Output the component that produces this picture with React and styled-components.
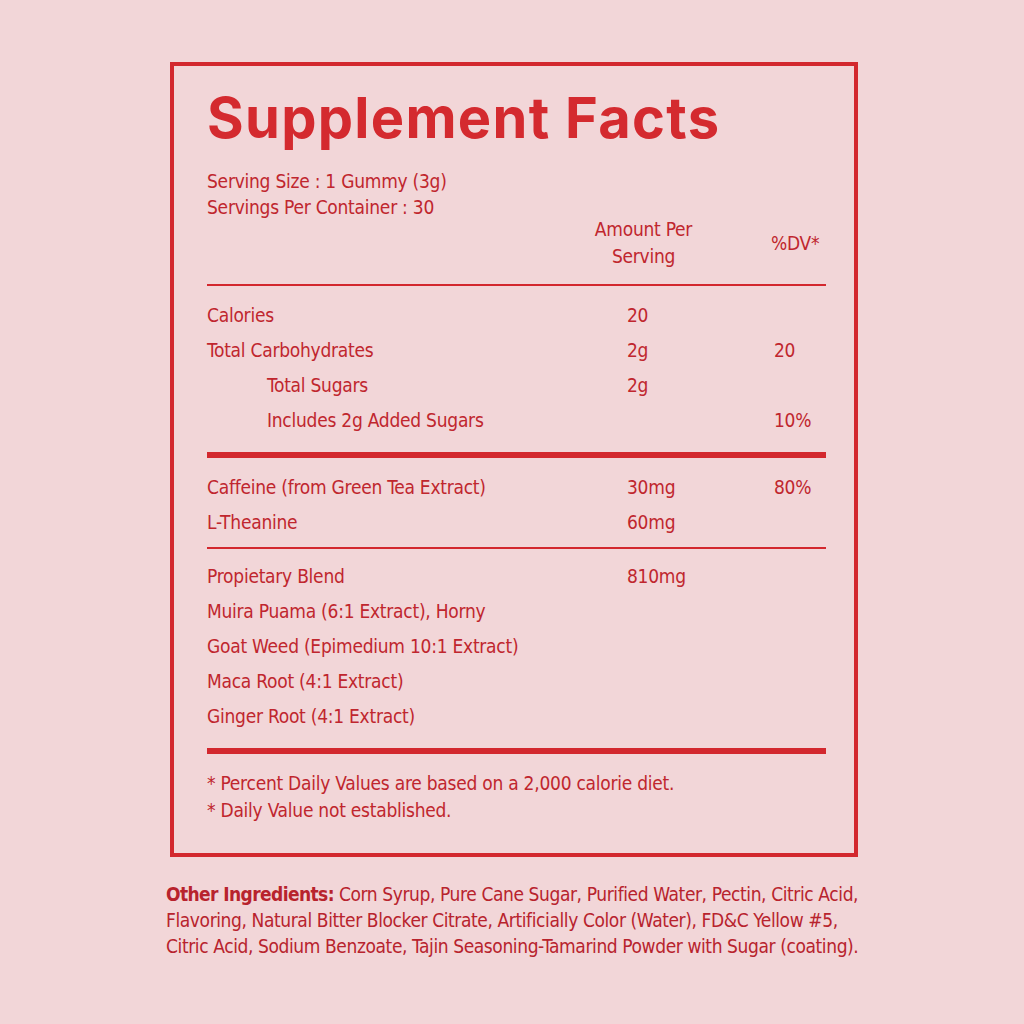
import styled, { createGlobalStyle } from "styled-components";

const GlobalStyle = createGlobalStyle`
  html, body {
    margin: 0;
    padding: 0;
    background: #f2d6d8;
  }
  body {
    font-family: "DejaVu Sans Condensed", "Liberation Sans Narrow", "Liberation Sans", sans-serif;
    font-stretch: condensed;
    color: #c0262e;
  }
`;

const Page = styled.div`
  width: 692px;
  margin: 0 auto;
  padding-top: 62px;
  padding-bottom: 40px;
`;

const Label = styled.section`
  width: 688px;
  margin-left: 4px;
  box-sizing: border-box;
  border: 4px solid #d3282e;
  padding: 20px 28px 29px 33px;
`;

const Title = styled.h1`
  margin: 0;
  font-family: "Inter", "Liberation Sans", sans-serif;
  font-stretch: normal;
  font-weight: 700;
  font-size: 56px;
  line-height: 64px;
  color: #d42a2f;
  letter-spacing: 1.3px;
`;

const Serving = styled.div`
  margin-top: 18px;
  font-size: 19px;
  line-height: 26px;
  letter-spacing: -0.25px;
`;

const HeadRow = styled.div`
  display: grid;
  grid-template-columns: 386px 101px 1fr;
  align-items: center;
  margin-top: -4px;
  padding-bottom: 14px;
  font-size: 19px;
  line-height: 27px;
  letter-spacing: -0.25px;
  white-space: nowrap;
`;

const HeadCell = styled.div`
  text-align: ${(p) => (p.$center ? "center" : "left")};
  padding-left: ${(p) => p.$pad || 0}px;
`;

const Rule = styled.hr`
  margin: 0;
  border: none;
  height: ${(p) => p.$h}px;
  background: #d3282e;
`;

const Group = styled.div`
  padding-top: ${(p) => p.$top}px;
  padding-bottom: ${(p) => p.$bottom}px;
`;

const Row = styled.div`
  display: grid;
  grid-template-columns: 420px 147px 1fr;
  font-size: 19px;
  line-height: 35px;
  letter-spacing: -0.25px;
  white-space: nowrap;
`;

const Name = styled.div`
  padding-left: ${(p) => (p.$indent ? 60 : 0)}px;
`;

const Notes = styled.div`
  padding-top: 16px;
  font-size: 19px;
  line-height: 27px;
  letter-spacing: -0.25px;
`;

const Ingredients = styled.p`
  margin: 24px 0 0;
  font-size: 19px;
  line-height: 26px;
  letter-spacing: -0.4px;
  white-space: nowrap;
  color: #b8232d;
`;

const Strong = styled.strong`
  font-weight: 700;
  letter-spacing: -0.6px;
`;

const nutrition = [
  { name: "Calories", amount: "20", dv: "" },
  { name: "Total Carbohydrates", amount: "2g", dv: "20" },
  { name: "Total Sugars", amount: "2g", dv: "", indent: true },
  { name: "Includes 2g Added Sugars", amount: "", dv: "10%", indent: true },
];

const actives = [
  { name: "Caffeine (from Green Tea Extract)", amount: "30mg", dv: "80%" },
  { name: "L-Theanine", amount: "60mg", dv: "" },
];

const blend = [
  { name: "Propietary Blend", amount: "810mg", dv: "" },
  { name: "Muira Puama (6:1 Extract), Horny", amount: "", dv: "" },
  { name: "Goat Weed (Epimedium 10:1 Extract)", amount: "", dv: "" },
  { name: "Maca Root (4:1 Extract)", amount: "", dv: "" },
  { name: "Ginger Root (4:1 Extract)", amount: "", dv: "" },
];

function Rows({ items }) {
  return items.map((r) => (
    <Row key={r.name}>
      <Name $indent={r.indent}>{r.name}</Name>
      <div>{r.amount}</div>
      <div>{r.dv}</div>
    </Row>
  ));
}

export default function App() {
  return (
    <>
      <GlobalStyle />
      <Page>
        <Label>
          <Title>Supplement Facts</Title>
          <Serving>
            Serving Size : 1 Gummy (3g)
            <br />
            Servings Per Container : 30
          </Serving>
          <HeadRow>
            <div />
            <HeadCell $center>
              Amount Per
              <br />
              Serving
            </HeadCell>
            <HeadCell $pad={77}>%DV*</HeadCell>
          </HeadRow>
          <Rule $h={2} />
          <Group $top={12} $bottom={14}>
            <Rows items={nutrition} />
          </Group>
          <Rule $h={6} />
          <Group $top={12} $bottom={7}>
            <Rows items={actives} />
          </Group>
          <Rule $h={2} />
          <Group $top={10} $bottom={14}>
            <Rows items={blend} />
          </Group>
          <Rule $h={6} />
          <Notes>
            * Percent Daily Values are based on a 2,000 calorie diet.
            <br />* Daily Value not established.
          </Notes>
        </Label>
        <Ingredients>
          <Strong>Other Ingredients:</Strong> Corn Syrup, Pure Cane Sugar, Purified Water, Pectin, Citric Acid,
          <br />
          Flavoring, Natural Bitter Blocker Citrate, Artificially Color (Water), FD&amp;C Yellow #5,
          <br />
          Citric Acid, Sodium Benzoate, Tajin Seasoning-Tamarind Powder with Sugar (coating).
        </Ingredients>
      </Page>
    </>
  );
}
